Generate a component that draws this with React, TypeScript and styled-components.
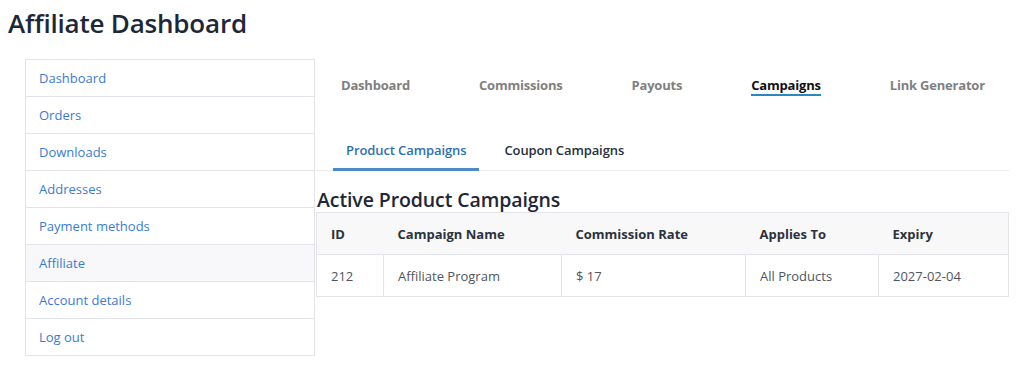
import { createGlobalStyle, styled } from 'styled-components';

const GlobalStyle = createGlobalStyle`
  body {
    margin: 0;
    background: #ffffff;
    font-family: 'Open Sans', 'Noto Sans', sans-serif;
  }
`;

const accountLinks = [
  'Dashboard',
  'Orders',
  'Downloads',
  'Addresses',
  'Payment methods',
  'Affiliate',
  'Account details',
  'Log out',
];

const topTabs = ['Dashboard', 'Commissions', 'Payouts', 'Campaigns', 'Link Generator'];

const columns = [
  { label: 'ID', width: 67 },
  { label: 'Campaign Name', width: 178 },
  { label: 'Commission Rate', width: 184 },
  { label: 'Applies To', width: 133 },
  { label: 'Expiry', width: 130 },
];

const campaigns = [
  { id: 212, name: 'Affiliate Program', rate: '$ 17', appliesTo: 'All Products', expiry: '2027-02-04' },
];

const App = () => {
  return (
    <>
      <GlobalStyle />
      <StPage>
        <StTitle>Affiliate Dashboard</StTitle>
        <StLayout>
          <StSidebar>
            {accountLinks.map((link) => (
              <StSideItem key={link} $isActive={link === 'Affiliate'}>
                <a href="#">{link}</a>
              </StSideItem>
            ))}
          </StSidebar>

          <StContent>
            <StTopNav>
              {topTabs.map((tab) => (
                <StTopTab key={tab} $isActive={tab === 'Campaigns'}>
                  {tab}
                </StTopTab>
              ))}
            </StTopNav>

            <StSubTabs>
              <StSubTab $isActive>Product Campaigns</StSubTab>
              <StSubTab $isActive={false}>Coupon Campaigns</StSubTab>
            </StSubTabs>

            <StHeading>Active Product Campaigns</StHeading>

            <StTable>
              <colgroup>
                {columns.map((col) => (
                  <col key={col.label} width={col.width} />
                ))}
              </colgroup>
              <thead>
                <tr>
                  {columns.map((col) => (
                    <th key={col.label}>{col.label}</th>
                  ))}
                </tr>
              </thead>
              <tbody>
                {campaigns.map((c) => (
                  <tr key={c.id}>
                    <td>{c.id}</td>
                    <td>{c.name}</td>
                    <td>{c.rate}</td>
                    <td>{c.appliesTo}</td>
                    <td>{c.expiry}</td>
                  </tr>
                ))}
              </tbody>
            </StTable>
          </StContent>
        </StLayout>
      </StPage>
    </>
  );
};

export default App;

const StPage = styled.div`
  padding: 0 8px;
`;

const StTitle = styled.h1`
  margin: 0;
  padding: 5px 0 0;
  height: 59px;
  box-sizing: border-box;

  color: #1d2738;
  font-size: 26px;
  font-weight: 600;
  letter-spacing: -0.2px;
`;

const StLayout = styled.div`
  display: flex;
  align-items: flex-start;
  gap: 1px;

  padding-left: 17px;
`;

const StSidebar = styled.ul`
  flex: 0 0 290px;
  margin: 0;
  padding: 0;
  list-style: none;

  border: 1px solid #e3e4e9;
  box-sizing: border-box;
`;

const StSideItem = styled.li<{ $isActive: boolean }>`
  height: 37px;
  box-sizing: border-box;
  border-top: 1px solid #e3e4e9;
  background: ${({ $isActive }) => ($isActive ? '#f8f8fa' : '#ffffff')};

  &:first-child {
    border-top: none;
    height: 36px;
  }

  & > a {
    display: flex;
    align-items: center;
    height: 100%;
    padding-left: 13px;

    color: #3a7bd5;
    font-size: 13px;
    text-decoration: none;
  }
`;

const StContent = styled.div`
  flex: 0 0 692px;
`;

const StTopNav = styled.nav`
  display: flex;
  gap: 69px;

  height: 52px;
  padding: 17px 0 0 25px;
  box-sizing: border-box;
`;

const StTopTab = styled.span<{ $isActive: boolean }>`
  height: 18px;
  line-height: 18px;

  border-bottom: 2px solid ${({ $isActive }) => ($isActive ? '#2a87c4' : 'transparent')};
  color: ${({ $isActive }) => ($isActive ? '#111111' : '#808080')};
  font-size: 13px;
  font-weight: 700;
  letter-spacing: -0.2px;
`;

const StSubTabs = styled.div`
  display: flex;
  gap: 12px;

  margin-top: 22px;
  padding-left: 17px;

  border-bottom: 1px solid #ececee;
`;

const StSubTab = styled.button<{ $isActive: boolean }>`
  height: 38px;
  margin-bottom: -1px;
  padding: 0 13px 2px;

  border: none;
  border-bottom: 3px solid ${({ $isActive }) => ($isActive ? '#4a8ac6' : 'transparent')};
  background: none;
  color: ${({ $isActive }) => ($isActive ? '#2e6fb2' : '#27303d')};
  font-family: inherit;
  font-size: 13px;
  font-weight: 600;
  letter-spacing: -0.1px;
`;

const StHeading = styled.h2`
  margin: 16px 0 0 1px;
  height: 25px;

  color: #1d2738;
  font-size: 19.5px;
  font-weight: 600;
  line-height: 25px;
  letter-spacing: -0.1px;
`;

const StTable = styled.table`
  width: 692px;
  border-collapse: collapse;
  table-layout: fixed;
  border: 1px solid #e3e4e9;

  th,
  td {
    height: 42px;
    padding: 0 0 0 14px;
    box-sizing: border-box;
    text-align: left;
    font-size: 13px;
  }

  th {
    background: #f8f8f9;
    color: #2b323d;
    font-weight: 700;
    border-bottom: 1px solid #e3e4e9;
  }

  td {
    color: #4f5561;
    border-left: 1px solid #e3e4e9;
  }

  td:first-child {
    border-left: none;
  }
`;
